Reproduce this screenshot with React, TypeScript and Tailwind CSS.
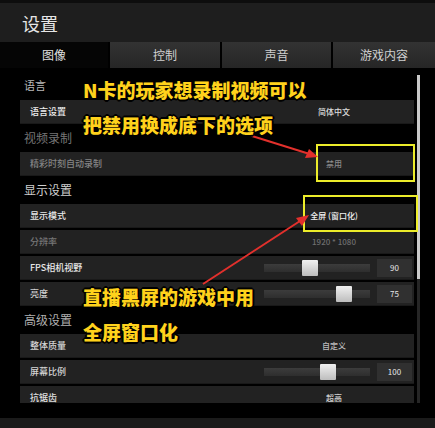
import React from "react";

type Row =
  | { kind: "text"; label: string; value: string; labelColor: string; valueColor: string }
  | { kind: "slider"; label: string; value: string; pos: number; labelColor: string };

interface Section {
  title: string;
  titleClass: string;
  rows: Row[];
}

const sections: Section[] = [
  {
    title: "语言",
    titleClass: "text-[11px] text-[#b8b8b8]",
    rows: [{ kind: "text", label: "语言设置", value: "简体中文", labelColor: "text-[#eeeeee]", valueColor: "text-[#dddddd]" }],
  },
  {
    title: "视频录制",
    titleClass: "text-[12px] text-[#767676]",
    rows: [{ kind: "text", label: "精彩时刻自动录制", value: "禁用", labelColor: "text-[#858585]", valueColor: "text-[#8a8a8a]" }],
  },
  {
    title: "显示设置",
    titleClass: "text-[12px] text-[#cfcfcf]",
    rows: [
      { kind: "text", label: "显示模式", value: "全屏 (窗口化)", labelColor: "text-[#e8e8e8]", valueColor: "text-[#f2f2f2]" },
      { kind: "text", label: "分辨率", value: "1920 * 1080", labelColor: "text-[#757575]", valueColor: "text-[#6e6e6e]" },
      { kind: "slider", label: "FPS相机视野", value: "90", pos: 38, labelColor: "text-[#e8e8e8]" },
      { kind: "slider", label: "亮度", value: "75", pos: 72, labelColor: "text-[#d0d0d0]" },
    ],
  },
  {
    title: "高级设置",
    titleClass: "text-[12px] text-[#b0b0b0]",
    rows: [
      { kind: "text", label: "整体质量", value: "自定义", labelColor: "text-[#d4d4d4]", valueColor: "text-[#bdbdbd]" },
      { kind: "slider", label: "屏幕比例", value: "100", pos: 56, labelColor: "text-[#d4d4d4]" },
      { kind: "text", label: "抗锯齿", value: "超高", labelColor: "text-[#e0e0e0]", valueColor: "text-[#d0d0d0]" },
    ],
  },
];

const tabs = [
  { name: "图像", w: "w-[108px]", active: true },
  { name: "控制", w: "w-[110px]", active: false },
  { name: "声音", w: "w-[109px]", active: false },
  { name: "游戏内容", w: "w-[102px]", active: false },
];

function SettingRow({ row }: { row: Row }) {
  return (
    <div className="h-[24px] w-[394px] flex items-center bg-[#222222] border-b border-[#191919]">
      <span className={`flex-1 pl-[10px] text-[9px] font-medium ${row.labelColor}`}>{row.label}</span>
      {row.kind === "text" ? (
        <span className={`w-[160px] text-center text-[8px] font-medium ${row.valueColor}`}>{row.value}</span>
      ) : (
        <div className="flex items-center">
          <div className="relative w-[106px] h-[8px] bg-gradient-to-b from-[#3c3c3c] to-[#2e2e2e]">
            <div
              className="absolute top-[-4px] w-[16px] h-[16px] rounded-[1px] bg-gradient-to-b from-[#f0f0f0] to-[#bdbdbd]"
              style={{ left: row.pos }}
            />
          </div>
          <div className="ml-[7px] mr-[2px] w-[35px] h-[18px] flex items-center justify-center bg-[#303030] text-[8px] text-[#e6e6e6]">
            {row.value}
          </div>
        </div>
      )}
    </div>
  );
}

export default function App() {
  return (
    <div className="relative w-[435px] h-[428px] overflow-hidden bg-black flex flex-col font-['Noto_Sans_CJK_SC','Noto_Sans',sans-serif]">
      {/* title bar */}
      <div className="h-[42px] shrink-0 flex items-center pl-[22px] bg-[#1e1e1e] border-t-[3px] border-[#0d0d0d]">
        <span className="text-[18px] text-[#e6e6e6] leading-none">设置</span>
      </div>

      {/* tabs */}
      <div className="h-[26px] shrink-0 flex gap-[2px] bg-black">
        {tabs.map((t) => (
          <div
            key={t.name}
            className={`${t.w} flex items-center justify-center text-[12px] ${
              t.active ? "bg-[#050505] text-[#e0e0e0]" : "bg-gradient-to-b from-[#333333] to-[#262626] text-[#d0d0d0]"
            }`}
          >
            {t.name}
          </div>
        ))}
      </div>

      {/* list */}
      <div className="h-[335px] shrink-0 flex overflow-hidden">
        <div className="w-[414px] pl-[20px] pt-[9px] flex flex-col">
          {sections.map((s, si) => (
            <div key={s.title} className={si === 0 ? "" : "mt-[6px]"}>
              <div className={`h-[16px] flex items-center pl-[4px] ${s.titleClass}`}>{s.title}</div>
              <div className={`flex flex-col gap-[2px] ${si === 0 ? "mt-[7px]" : "mt-[6px]"}`}>
                {s.rows.map((r) => (
                  <SettingRow key={r.label} row={r} />
                ))}
              </div>
            </div>
          ))}
        </div>
        <div className="ml-[3px] w-[3px] pt-[7px] flex flex-col">
          <div className="h-[204px] bg-[#c9c9c9]" />
          <div className="flex-1 bg-[#262626]" />
        </div>
      </div>

      <div className="h-[15px] shrink-0 bg-black" />
      <div className="flex-1 bg-[#1b1b1b]" />

      {/* annotation boxes */}
      <div className="absolute left-[316px] top-[144px] w-[99px] h-[38px] border-2 border-[#ecec2a]" />
      <div className="absolute left-[303px] top-[195px] w-[115px] h-[37px] border-2 border-[#ecec2a]" />

      {/* annotation arrows */}
      <svg className="absolute inset-0 pointer-events-none" width="435" height="428" viewBox="0 0 435 428">
        <line x1="236" y1="131" x2="308" y2="153.5" stroke="#e2302c" strokeWidth="2" />
        <polygon points="318,157 305,158 309,149" fill="#e2302c" />
        <line x1="203" y1="284" x2="300" y2="221" stroke="#e2302c" strokeWidth="2" />
        <polygon points="309,215 302,226 296,218" fill="#e2302c" />
      </svg>

      {/* annotation captions */}
      <div className="absolute left-[83px] top-[80px] flex flex-col gap-[16px] text-[19px] leading-[19px] font-black text-[#ffd21c] [text-shadow:1px_1px_0_#000,-1px_-1px_0_#000,1px_-1px_0_#000,-1px_1px_0_#000,0_2px_0_#000,2px_0_0_#000,-2px_0_0_#000,0_-2px_0_#000]">
        <span>N卡的玩家想录制视频可以</span>
        <span>把禁用换成底下的选项</span>
      </div>
      <div className="absolute left-[83px] top-[287px] flex flex-col gap-[16px] text-[19px] leading-[19px] font-black text-[#ffd21c] [text-shadow:1px_1px_0_#000,-1px_-1px_0_#000,1px_-1px_0_#000,-1px_1px_0_#000,0_2px_0_#000,2px_0_0_#000,-2px_0_0_#000,0_-2px_0_#000]">
        <span>直播黑屏的游戏中用</span>
        <span>全屏窗口化</span>
      </div>
    </div>
  );
}
